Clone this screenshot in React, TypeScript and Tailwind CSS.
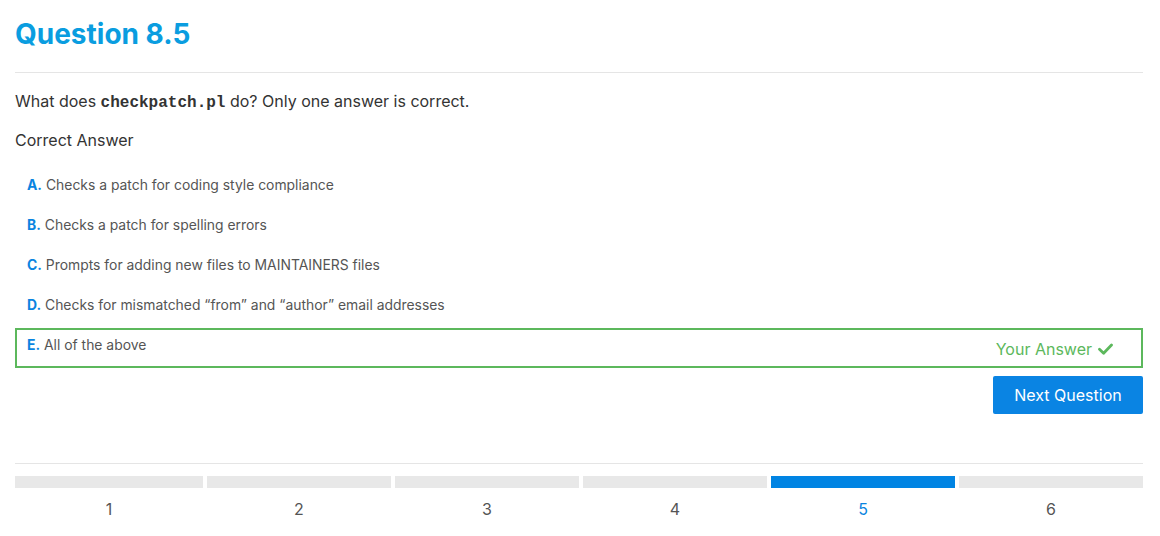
import React from 'react';

const options = [
  { label: 'A.', text: 'Checks a patch for coding style compliance' },
  { label: 'B.', text: 'Checks a patch for spelling errors' },
  { label: 'C.', text: 'Prompts for adding new files to MAINTAINERS files' },
  { label: 'D.', text: 'Checks for mismatched \u201cfrom\u201d and \u201cauthor\u201d email addresses' },
  { label: 'E.', text: 'All of the above', picked: true },
];

function Check() {
  return (
    <svg width="15" height="12" viewBox="0 0 15 12" className="ml-[6px]">
      <path d="M1.5 6.2 L5.6 10.2 L13.5 2" fill="none" stroke="#5cb85c" strokeWidth="2.8" strokeLinecap="round" strokeLinejoin="round" />
    </svg>
  );
}

export default function App() {
  const steps = [1, 2, 3, 4, 5, 6];
  const current = 5;

  return (
    <div className="w-[1160px] h-[536px] bg-white pl-[15px] pr-[17px] pt-[14px] font-['Inter',sans-serif] text-[#333]">
      <h1 className="text-[28px] leading-[40px] font-bold text-[#0a9de0]">Question 8.5</h1>
      <div className="mt-[18px] h-px bg-[#e5e5e5]" />

      <p className="mt-4 text-base leading-6">
        What does <code className="font-['Liberation_Mono',monospace] font-bold text-[#333]">checkpatch.pl</code> do? Only one answer is correct.
      </p>
      <p className="mt-[13px] text-base leading-6">Correct Answer</p>

      <div className="mt-4 flex flex-col">
        {options.map(o => (
          <div
            key={o.label}
            className={`h-10 flex justify-between items-start border-2 px-[10px] ${o.picked ? 'border-[#5cb85c]' : 'border-transparent'}`}
          >
            <div className="pt-[5px] text-[13.9px] leading-5 text-[#555]">
              <span className="font-bold text-[#0a84e0]">{o.label}</span> {o.text}
            </div>
            {o.picked && (
              <div className="pt-[7px] pr-[18px] flex items-center text-base leading-6 text-[#5cb85c]">
                Your Answer
                <Check />
              </div>
            )}
          </div>
        ))}
      </div>

      <div className="mt-2 flex justify-end">
        <button className="w-[150px] h-[38px] rounded-[2px] bg-[#0a84e3] text-white text-base">Next Question</button>
      </div>

      <div className="mt-[49px] h-px bg-[#e5e5e5]" />

      <div className="mt-3 flex gap-1">
        {steps.map(n => (
          <div key={n} className={`flex flex-col items-center ${n === 1 ? 'w-[188px]' : 'w-[184px]'}`}>
            <div className={`w-full h-3 ${n === current ? 'bg-[#0084e3]' : 'bg-[#e8e8e8]'}`} />
            <span className={`mt-[9px] text-base leading-6 ${n === current ? 'text-[#0a84e0]' : 'text-[#555]'}`}>{n}</span>
          </div>
        ))}
      </div>
    </div>
  );
}
